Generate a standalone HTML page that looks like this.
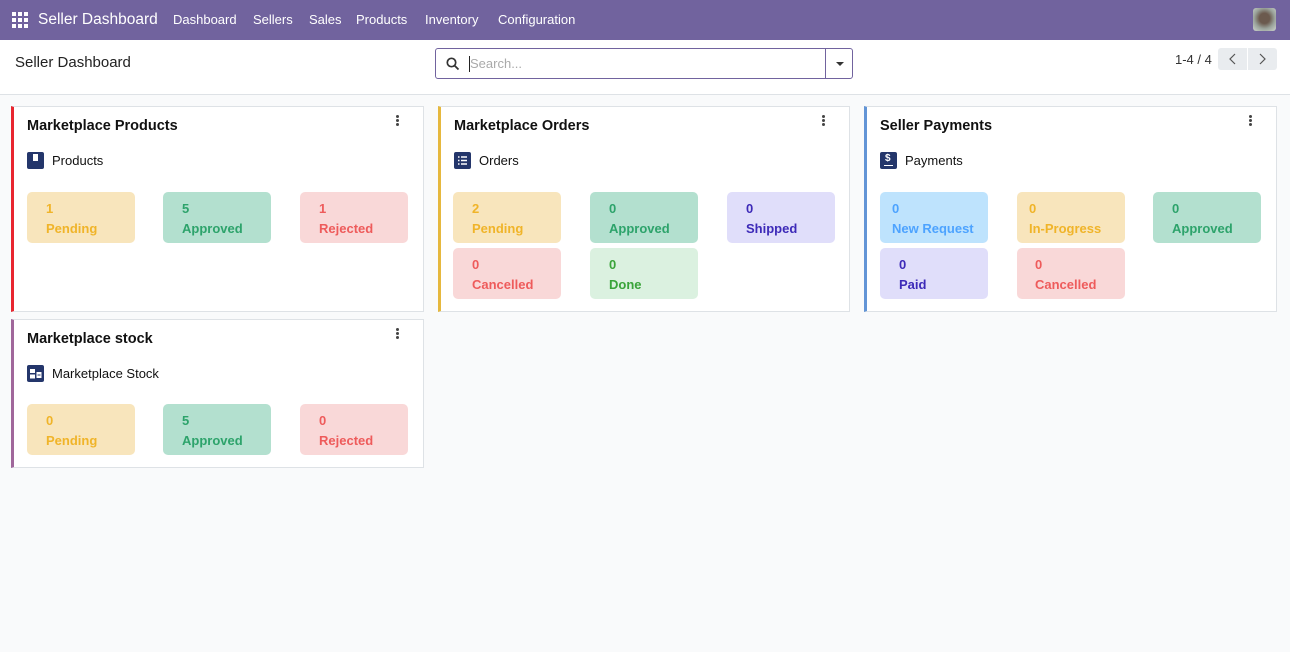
<!DOCTYPE html>
<html><head><meta charset="utf-8"><style>
*{box-sizing:border-box;margin:0;padding:0}
body{width:1290px;height:652px;background:#f9fafb;font-family:"Liberation Sans","DejaVu Sans",sans-serif;font-size:13px;color:#111;position:relative;overflow:hidden}
.nav{position:absolute;left:0;top:0;width:1290px;height:40px;background:#71639e;color:#fff}
.nav span{position:absolute;top:12px;font-size:13px}
.cp{position:absolute;left:0;top:40px;width:1290px;height:55px;background:#fff;border-bottom:1px solid #dee2e6}
.card{position:absolute;background:#fff;border:1px solid #dee2e6;border-left:3px solid}
.title{position:absolute;left:13px;top:11px;font-weight:bold;font-size:14.5px}
.dots{position:absolute;right:24px;top:8px;width:3px}
.dots i{display:block;width:3px;height:3px;background:#444;border-radius:50%;margin-bottom:1px}
.sub{position:absolute;left:38px;top:46px;font-size:13px}
.ico{position:absolute;left:13px;top:45px;width:17px;height:17px;background:#24366b;border-radius:2px}
.t{position:absolute;width:108px;height:51px;border-radius:5px;font-weight:bold;font-size:13px;padding:7px 0 0 19px;line-height:20px}
.y{background:#f8e5bc;color:#f0b429}.g{background:#b3e0cf;color:#2da36b}.r{background:#f9d8d8;color:#ee5b5b}
.p{background:#e0defa;color:#3d2ab8}.b{background:#bee3fd;color:#4da3ff}.d{background:#dbf1e0;color:#3aa43a}
</style></head><body>
<div class="nav">
<svg style="position:absolute;left:12px;top:12px" width="16" height="16"><g fill="#fff"><rect x="0" y="0" width="4" height="4"/><rect x="6" y="0" width="4" height="4"/><rect x="12" y="0" width="4" height="4"/><rect x="0" y="6" width="4" height="4"/><rect x="6" y="6" width="4" height="4"/><rect x="12" y="6" width="4" height="4"/><rect x="0" y="12" width="4" height="4"/><rect x="6" y="12" width="4" height="4"/><rect x="12" y="12" width="4" height="4"/></g></svg>
<span style="left:38px;top:11px;font-size:15.5px">Seller Dashboard</span>
<span style="left:173px">Dashboard</span><span style="left:253px">Sellers</span><span style="left:309px">Sales</span><span style="left:356px">Products</span><span style="left:425px">Inventory</span><span style="left:498px">Configuration</span>
<div style="position:absolute;left:1253px;top:8px;width:23px;height:23px;border-radius:3px;background:radial-gradient(circle at 50% 45%,#6b5a4e 30%,#9aa39b 60%,#cfd5cf)"></div>
</div>
<div class="cp">
<div style="position:absolute;left:15px;top:14px;font-size:15px;color:#222">Seller Dashboard</div>
<div style="position:absolute;left:435px;top:8px;width:418px;height:31px;border:1px solid #71639e;border-radius:3px">
<svg style="position:absolute;left:10px;top:8px" width="14" height="14"><circle cx="5.5" cy="5.5" r="4.2" fill="none" stroke="#333" stroke-width="1.7"/><line x1="8.5" y1="8.5" x2="12.5" y2="12.5" stroke="#333" stroke-width="1.8"/></svg>
<div style="position:absolute;left:33px;top:7px;width:1px;height:16px;background:#222"></div>
<span style="position:absolute;left:34px;top:7px;color:#aaa">Search...</span>
<div style="position:absolute;left:389px;top:0;width:1px;height:29px;background:#71639e"></div>
<div style="position:absolute;left:400px;top:13px;border-left:4px solid transparent;border-right:4px solid transparent;border-top:4px solid #333"></div>
</div>
<span style="position:absolute;left:1175px;top:12px;color:#333">1-4 / 4</span>
<div style="position:absolute;left:1218px;top:8px;width:59px;height:22px;background:#e9ecef;border-radius:3px"><div style="position:absolute;left:29px;top:0;width:1px;height:22px;background:#fff"></div>
<svg style="position:absolute;left:0;top:0" width="59" height="22"><path d="M17 6l-5 5 5 5M42 6l5 5-5 5" fill="none" stroke="#555" stroke-width="1.2"/></svg></div>
</div>

<div class="card" style="left:11px;top:106px;width:413px;height:206px;border-left-color:#e8262f">
<div class="title">Marketplace Products</div><div class="dots"><i></i><i></i><i></i></div>
<div class="ico"><div style="position:absolute;left:6px;top:2px;width:5px;height:7px;background:#fff"></div></div><div class="sub">Products</div>
</div>
<div class="card" style="left:438px;top:106px;width:412px;height:206px;border-left-color:#e6b83e">
<div class="title">Marketplace Orders</div><div class="dots"><i></i><i></i><i></i></div>
<div class="ico"><svg width="17" height="17"><g stroke="#fff" stroke-width="1.5"><line x1="4" y1="5" x2="5.5" y2="5"/><line x1="7" y1="5" x2="13" y2="5"/><line x1="4" y1="8.5" x2="5.5" y2="8.5"/><line x1="7" y1="8.5" x2="13" y2="8.5"/><line x1="4" y1="12" x2="5.5" y2="12"/><line x1="7" y1="12" x2="13" y2="12"/></g></svg></div><div class="sub">Orders</div>
</div>
<div class="card" style="left:864px;top:106px;width:413px;height:206px;border-left-color:#6395d6">
<div class="title">Seller Payments</div><div class="dots"><i></i><i></i><i></i></div>
<div class="ico"><span style="position:absolute;left:5px;top:1px;color:#fff;font-size:10px;font-weight:bold">$</span><div style="position:absolute;left:4px;top:13px;width:9px;height:1px;background:#fff"></div></div><div class="sub">Payments</div>
</div>
<div class="card" style="left:11px;top:319px;width:413px;height:149px;border-left-color:#a0679b">
<div class="title">Marketplace stock</div><div class="dots"><i></i><i></i><i></i></div>
<div class="ico"><svg width="17" height="17"><g fill="#fff"><rect x="3" y="4" width="5" height="4"/><rect x="3" y="9.5" width="5" height="4"/><rect x="9.5" y="7" width="5" height="6"/></g><rect x="10.5" y="9.5" width="3" height="1" fill="#24366b"/></svg></div><div class="sub">Marketplace Stock</div>
</div>

<div class="t y" style="left:27px;top:192px">1<br>Pending</div>
<div class="t g" style="left:163px;top:192px">5<br>Approved</div>
<div class="t r" style="left:300px;top:192px">1<br>Rejected</div>

<div class="t y" style="left:453px;top:192px">2<br>Pending</div>
<div class="t g" style="left:590px;top:192px">0<br>Approved</div>
<div class="t p" style="left:727px;top:192px">0<br>Shipped</div>
<div class="t r" style="left:453px;top:248px">0<br>Cancelled</div>
<div class="t d" style="left:590px;top:248px">0<br>Done</div>

<div class="t b" style="left:880px;top:192px;padding-left:12px">0<br>New Request</div>
<div class="t y" style="left:1017px;top:192px;padding-left:12px">0<br>In-Progress</div>
<div class="t g" style="left:1153px;top:192px;padding-left:19px">0<br>Approved</div>
<div class="t p" style="left:880px;top:248px">0<br>Paid</div>
<div class="t r" style="left:1017px;top:248px;padding-left:18px">0<br>Cancelled</div>

<div class="t y" style="left:27px;top:404px">0<br>Pending</div>
<div class="t g" style="left:163px;top:404px">5<br>Approved</div>
<div class="t r" style="left:300px;top:404px">0<br>Rejected</div>
</body></html>
